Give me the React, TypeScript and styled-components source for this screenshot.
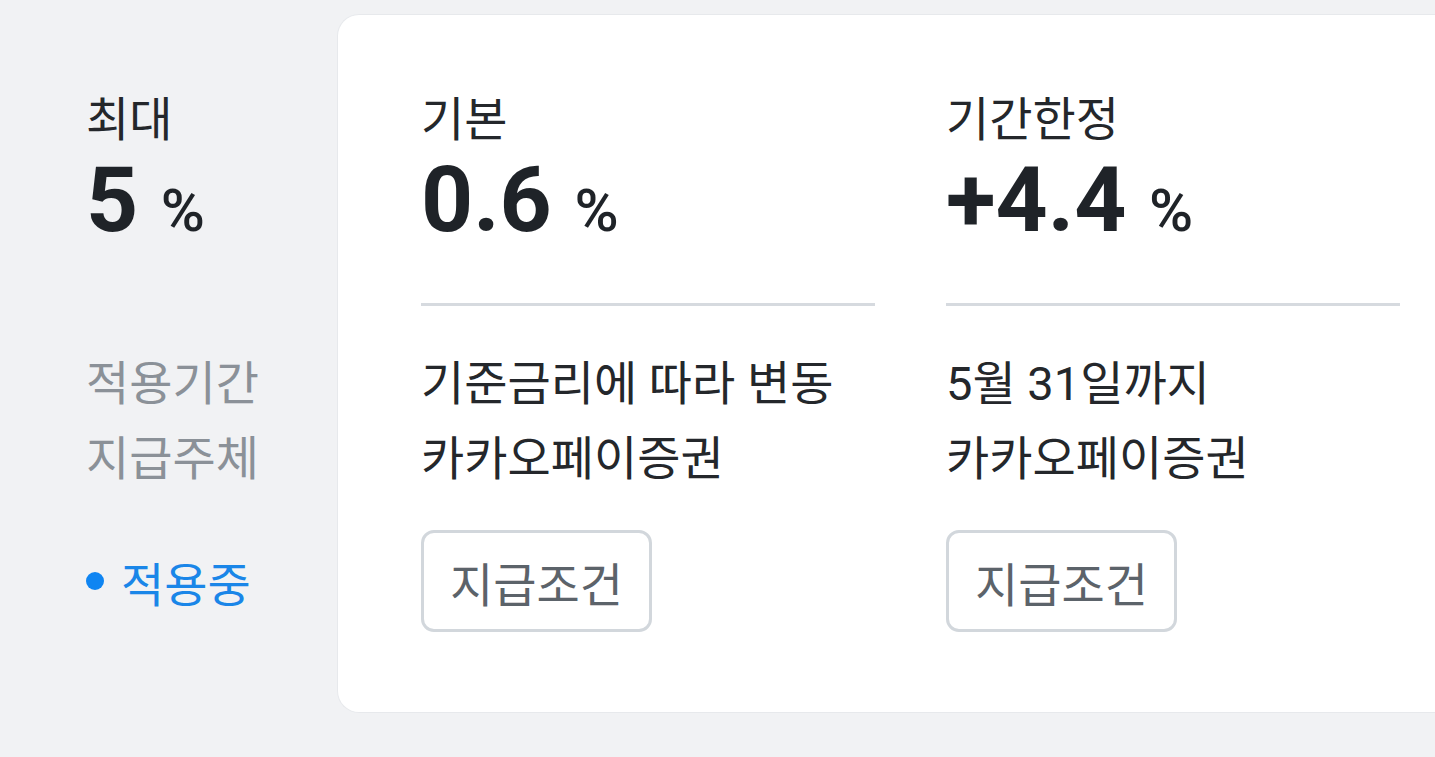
import React from "react";
import styled, { createGlobalStyle } from "styled-components";

const GlobalStyle = createGlobalStyle`
  html, body {
    margin: 0;
    padding: 0;
    background: #f1f2f4;
  }
  body {
    font-family: Roboto, "Noto Sans CJK KR", "Noto Sans", sans-serif;
    color: #1f2328;
  }
`;

const Page = styled.div`
  width: 1435px;
  height: 757px;
  display: flex;
  overflow: hidden;
  box-sizing: border-box;
`;

const Column = styled.div`
  width: 454px;
  flex-shrink: 0;
  display: flex;
  flex-direction: column;
  padding-top: 75px;
  box-sizing: border-box;
`;

const Side = styled(Column)`
  width: 337px;
  padding-left: 86px;
  padding-top: 90px;
`;

const Card = styled.div`
  margin-top: 14px;
  height: 699px;
  width: 1300px;
  flex-shrink: 0;
  background: #ffffff;
  border: 1px solid #e7e9ec;
  border-right: 0;
  border-radius: 22px 0 0 22px;
  box-sizing: border-box;
  display: flex;
  gap: 71px;
  padding-left: 83px;
`;

const Label = styled.div`
  font-size: 47px;
  line-height: 60px;
  height: 60px;
  color: #24272b;
`;

const Value = styled.div`
  height: 100px;
  line-height: 100px;
  font-size: 91px;
  font-weight: 700;
  color: #1f2328;
  white-space: nowrap;
`;

const Unit = styled.span`
  font-size: 60px;
  font-weight: 500;
`;

const Divider = styled.div<{ $blank?: boolean }>`
  margin-top: 53px;
  height: 3px;
  background: ${(props) => (props.$blank ? "transparent" : "#d6dadf")};
`;

const InfoList = styled.div`
  margin-top: 40px;
  display: flex;
  flex-direction: column;
`;

const Info = styled.div<{ $muted?: boolean }>`
  font-size: 47px;
  line-height: 75px;
  color: ${(props) => (props.$muted ? "#8b9198" : "#24272b")};
  white-space: nowrap;
`;

const ActionRow = styled.div`
  margin-top: 34px;
  height: 102px;
  display: flex;
  align-items: center;
`;

const ConditionButton = styled.button`
  height: 102px;
  padding: 0 26px;
  border: 3px solid #d2d7dc;
  border-radius: 13px;
  background: #ffffff;
  font-family: Roboto, "Noto Sans CJK KR", sans-serif;
  font-size: 47px;
  color: #5c636a;
  box-sizing: border-box;
`;

const Status = styled.div`
  display: flex;
  align-items: center;
  gap: 17px;
  font-size: 47px;
  color: #1a86e8;
`;

const Dot = styled.span`
  width: 18px;
  height: 18px;
  border-radius: 50%;
  background: #0f85f2;
`;

const rates = [
  {
    label: "기본",
    value: "0.6",
    period: "기준금리에 따라 변동",
    payer: "카카오페이증권",
  },
  {
    label: "기간한정",
    value: "+4.4",
    period: "5월 31일까지",
    payer: "카카오페이증권",
  },
];

export default function App() {
  return (
    <Page>
      <GlobalStyle />
      <Side>
        <Label>최대</Label>
        <Value>
          5 <Unit>%</Unit>
        </Value>
        <Divider $blank />
        <InfoList>
          <Info $muted>적용기간</Info>
          <Info $muted>지급주체</Info>
        </InfoList>
        <ActionRow>
          <Status>
            <Dot />
            적용중
          </Status>
        </ActionRow>
      </Side>
      <Card>
        {rates.map((rate) => (
          <Column key={rate.label}>
            <Label>{rate.label}</Label>
            <Value>
              {rate.value} <Unit>%</Unit>
            </Value>
            <Divider />
            <InfoList>
              <Info>{rate.period}</Info>
              <Info>{rate.payer}</Info>
            </InfoList>
            <ActionRow>
              <ConditionButton>지급조건</ConditionButton>
            </ActionRow>
          </Column>
        ))}
      </Card>
    </Page>
  );
}
